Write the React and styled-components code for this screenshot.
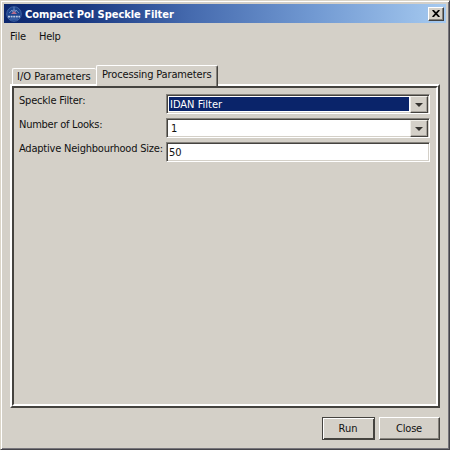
import React from "react";
import styled, { createGlobalStyle } from "styled-components";

const face = "#d4d0c8";
const dark = "#45433f";

const GlobalStyle = createGlobalStyle`
  * { box-sizing: border-box; }
  body { margin: 0; background: ${face}; overflow: hidden; }
`;

const Window = styled.div`
  width: 450px;
  height: 450px;
  display: flex;
  flex-direction: column;
  padding: 2px;
  background: ${face};
  border: 1px solid;
  border-color: #dbd5c8 #45444a #45444a #dbd5c8;
  box-shadow: inset 1px 1px #fff, inset -1px -1px #77757b;
  font: 11px "DejaVu Sans Condensed", "DejaVu Sans", sans-serif;
  font-stretch: condensed;
  color: #111;
`;

const TitleBar = styled.header`
  height: 19px;
  margin: 1px 1px 0;
  padding: 0 2px 0 2px;
  display: flex;
  align-items: center;
  background: linear-gradient(90deg, #0c276d 0%, #1a3982 18%, #456aae 42%, #7199d2 70%, #a6caf0 100%);
`;

const AppIcon = styled.svg`
  width: 16px;
  height: 16px;
  flex: none;
`;

const Title = styled.h1`
  flex: 1;
  margin: 0 0 0 3px;
  padding-top: 2px;
  font-size: 11px;
  line-height: 18px;
  font-weight: bold;
  color: #fff;
  white-space: nowrap;
  letter-spacing: -0.04px;
`;

const CloseBox = styled.button`
  width: 16px;
  height: 14px;
  padding: 0;
  display: grid;
  place-items: center;
  background: ${face};
  border: 1px solid;
  border-color: #fff #404040 #404040 #fff;
  box-shadow: inset -1px -1px #85827c;
`;

const MenuBar = styled.nav`
  height: 25px;
  padding: 0 7px;
  display: flex;
  gap: 13px;
  line-height: 27px;
`;

const Text = styled.span`
  white-space: nowrap;
  letter-spacing: ${(p) => p.$spacing || 0}px;
`;

const TabStrip = styled.div`
  height: 20px;
  margin: 16px 0 0 9px;
  display: flex;
  align-items: flex-end;
`;

const Tab = styled.div`
  position: relative;
  width: ${(p) => p.$width}px;
  height: ${(p) => (p.$active ? 21 : 16)}px;
  margin-bottom: ${(p) => (p.$active ? -2 : 0)}px;
  padding-left: ${(p) => (p.$active ? 5 : 4)}px;
  line-height: ${(p) => (p.$active ? 18 : 15)}px;
  background: ${face};
  border-top: 1px solid #fff;
  border-left: 1px solid #fff;
  border-right: ${(p) => (p.$active ? `1px solid ${dark}` : "0")};
  box-shadow: ${(p) => (p.$active ? "inset -1px 0 #85827c" : "none")};
  border-radius: 2px 2px 0 0;
`;

const Panel = styled.section`
  width: 430px;
  height: 324px;
  margin-left: 7px;
  border: 2px solid;
  border-color: #fff ${dark} ${dark} #fff;
`;

const PanelInner = styled.div`
  height: 100%;
  border: 2px solid;
  border-color: ${dark} #fff #fff ${dark};
  padding: 6px 6px 0 5px;
  display: grid;
  grid-template-columns: 147px 264px;
  grid-template-rows: 24px 24px 20px;
`;

const Label = styled.label`
  line-height: 14px;
`;

const Field = styled.div`
  height: 20px;
  display: flex;
  background: #fff;
  border: 1px solid;
  border-color: #85827c #fff #fff #85827c;
  box-shadow: inset 1px 1px ${dark}, inset -1px -1px ${face};
  padding: 2px;
`;

const Value = styled.div`
  flex: 1;
  padding-left: ${(p) => p.$indent}px;
  line-height: ${(p) => p.$line || 16}px;
  color: ${(p) => (p.$selected ? "#fff" : "#111")};
  background: ${(p) => (p.$selected ? "#0a246a" : "#fff")};
`;

const DropButton = styled.button`
  width: 18px;
  height: 17px;
  margin: -1px -1px 0 1px;
  padding: 0;
  display: grid;
  place-items: center;
  background: ${face};
  border: 1px solid;
  border-color: #f1efe9 ${dark} ${dark} #f1efe9;
  box-shadow: inset -1px -1px #aaa69f;
`;

const Actions = styled.footer`
  margin: 9px 7px 0 0;
  display: flex;
  justify-content: flex-end;
  gap: 4px;
`;

const Button = styled.button`
  width: ${(p) => p.$width}px;
  height: 23px;
  padding: 0 1px 1px 0;
  font: inherit;
  color: #111;
  background: ${face};
  border: 1px solid;
  border-color: ${(p) => (p.$primary ? dark : `#fff ${dark} ${dark} #fff`)};
  box-shadow: ${(p) => (p.$primary ? `inset 1px 1px #fff, inset -1px -1px ${dark}` : "inset -1px -1px #85827c")};
`;

function Arrow() {
  return (
    <svg width="8" height="4" viewBox="0 0 8 4">
      <path d="M0 0H8L4 4Z" fill="#35332f" />
    </svg>
  );
}

function Combo({ children, selected, indent }) {
  return (
    <Field>
      <Value $selected={selected} $indent={indent}>{children}</Value>
      <DropButton aria-label="Open list"><Arrow /></DropButton>
    </Field>
  );
}

export default function App() {
  return (
    <Window>
      <GlobalStyle />
      <TitleBar>
        <AppIcon viewBox="0 0 16 16">
          <circle cx="8" cy="8" r="7.3" fill="#1c438d" stroke="#4a6dab" strokeWidth=".8" />
          <path d="M3 7Q8 1 13 7M8 1V6M5 4L8 7L11 4" fill="none" stroke="#7896c8" strokeWidth=".8" />
          <path d="M5 8L8 5L11 8Z" fill="#b66d8c" />
          <path d="M2 10.7H14" stroke="#b9c8e4" strokeWidth="1.8" strokeDasharray="2 .6" />
          <path d="M4 13H12" stroke="#4e74b4" />
        </AppIcon>
        <Title>Compact Pol Speckle Filter</Title>
        <CloseBox aria-label="Close window">
          <svg width="8" height="7" viewBox="0 0 8 7">
            <path d="M.7 0L7.3 7M7.3 0L.7 7" stroke="#000" strokeWidth="1.8" />
          </svg>
        </CloseBox>
      </TitleBar>
      <MenuBar>
        <Text $spacing={-0.1}>File</Text>
        <Text $spacing={-0.3}>Help</Text>
      </MenuBar>
      <TabStrip>
        <Tab $width={84}><Text>I/O Parameters</Text></Tab>
        <Tab $width={122} $active><Text $spacing={-0.15}>Processing Parameters</Text></Tab>
      </TabStrip>
      <Panel>
        <PanelInner>
          <Label><Text $spacing={-0.2}>Speckle Filter:</Text></Label>
          <Combo selected indent={1}>IDAN Filter</Combo>
          <Label><Text $spacing={-0.25}>Number of Looks:</Text></Label>
          <Combo indent={2}>1</Combo>
          <Label><Text $spacing={-0.21}>Adaptive Neighbourhood Size:</Text></Label>
          <Field><Value $indent={0} $line={15}>50</Value></Field>
        </PanelInner>
      </Panel>
      <Actions>
        <Button $width={53} $primary>Run</Button>
        <Button $width={61}><Text $spacing={-0.2}>Close</Text></Button>
      </Actions>
    </Window>
  );
}
